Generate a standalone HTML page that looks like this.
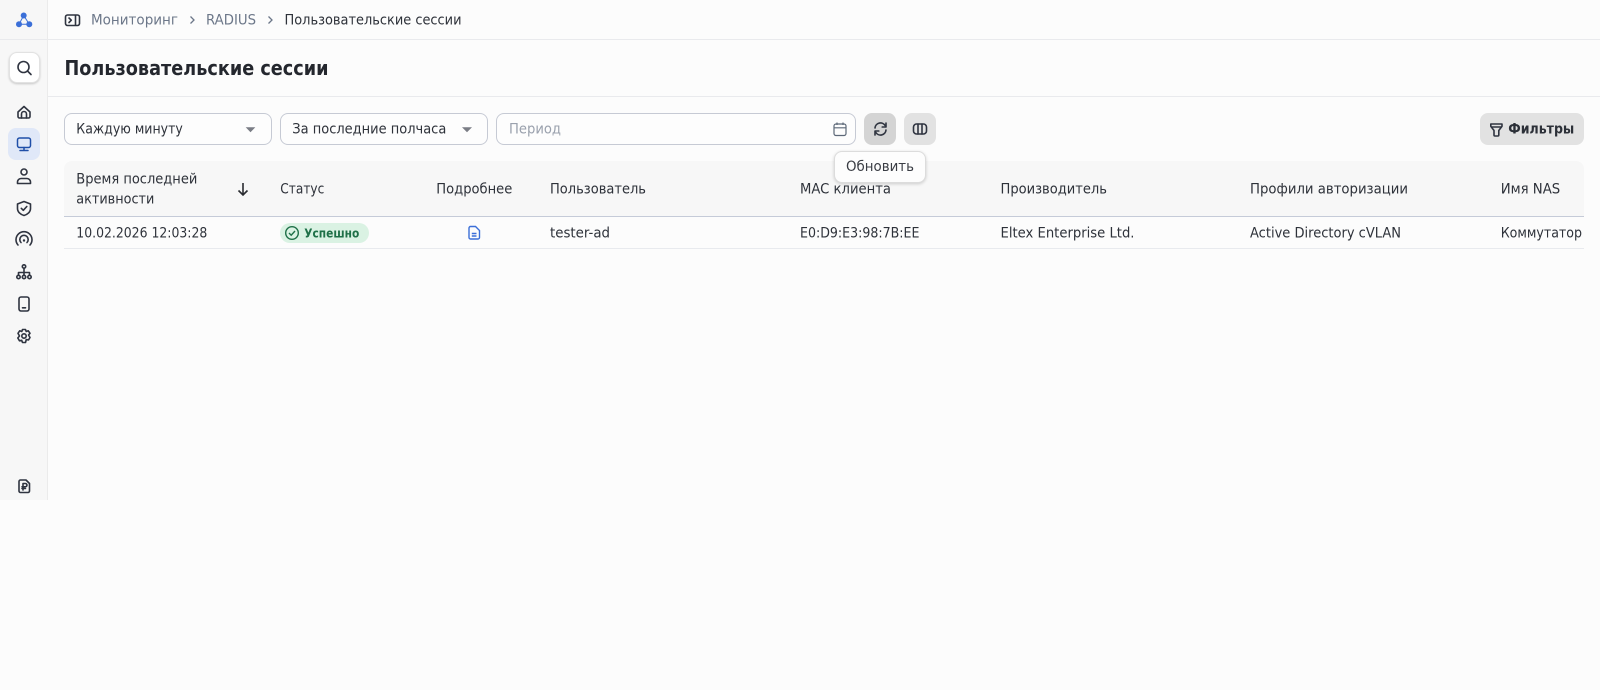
<!DOCTYPE html>
<html lang="ru"><head><meta charset="utf-8"><title>Пользовательские сессии</title>
<style>
html,body{margin:0;padding:0;width:1600px;height:690px;overflow:hidden;background:#fcfcfc}
.a{position:absolute;box-sizing:border-box}
text{font-family:"DejaVu Sans","Liberation Sans",sans-serif;font-size:14px;fill:#2e323a}
.g{fill:#6c7789}.h{fill:#9aa1ad}.b{font-weight:700}
.i{fill:none;stroke:#2f3440;stroke-width:1.6;stroke-linecap:round;stroke-linejoin:round}
</style></head><body>
<div class="a" style="left:0;top:0;width:48px;height:500px;background:#f7f7f7;border-right:1px solid #ebebeb"></div>
<div class="a" style="left:48px;top:39px;width:1552px;height:1px;background:#e9eaed"></div>
<div class="a" style="left:0;top:39px;width:47px;height:1px;background:#e9eaed"></div>
<div class="a" style="left:48px;top:96px;width:1552px;height:1px;background:#e9eaed"></div>
<div class="a" style="left:9px;top:52px;width:31px;height:31px;background:#fff;border:1px solid #e2e2e2;border-radius:8px;box-shadow:0 1px 2px rgba(0,0,0,.2)"></div>
<div class="a" style="left:8px;top:128px;width:32px;height:32px;background:#e0e8f8;border-radius:8px"></div>
<div class="a" style="left:64px;top:113px;width:208px;height:32px;border:1px solid #c6cad4;border-radius:8px;background:#fdfdfd"></div>
<div class="a" style="left:280px;top:113px;width:208px;height:32px;border:1px solid #c6cad4;border-radius:8px;background:#fdfdfd"></div>
<div class="a" style="left:496px;top:113px;width:360px;height:32px;border:1px solid #c6cad4;border-radius:8px;background:#fdfdfd"></div>
<div class="a" style="left:864px;top:113px;width:32px;height:32px;background:#d4d4d4;border-radius:8px"></div>
<div class="a" style="left:904px;top:113px;width:32px;height:32px;background:#e2e2e2;border-radius:8px"></div>
<div class="a" style="left:1480px;top:113px;width:104px;height:32px;background:#e2e2e2;border-radius:8px"></div>
<div class="a" style="left:64px;top:161px;width:1520px;height:56px;background:#f7f7f7;border-radius:8px 8px 0 0;border-bottom:1px solid #c5cbd8"></div>
<div class="a" style="left:64px;top:248px;width:1520px;height:1px;background:#e8eaee"></div>
<div class="a" style="left:280px;top:223px;width:89px;height:20px;background:#daf2e3;border-radius:10px"></div>

<svg class="a" style="left:0;top:0" width="1600" height="690" viewBox="0 0 1600 690">
<!-- logo -->
<path d="M23.700 15.500 19 24.200H29.300Z" fill="none" stroke="#3b6fd8" stroke-width="1"/>
<g fill="#3b6fd8"><circle cx="23.700" cy="15.500" r="3"/><circle cx="19" cy="24.200" r="3"/><circle cx="29.300" cy="24.200" r="3"/></g>
<!-- search -->
<circle class="i" cx="23.500" cy="67" r="5.500"/><path class="i" d="M27.500 71 31 74.500"/>
<!-- home -->
<path class="i" d="M18 112 24 106.500 30 112V116.500A1.500 1.500 0 0 1 28.500 118H19.500A1.500 1.500 0 0 1 18 116.500Z"/><path class="i" d="M21.500 118V114A2.500 2.500 0 0 1 26.500 114V118"/>
<!-- monitor -->
<rect x="17.500" y="138" width="13" height="9.500" rx="2" fill="none" stroke="#1f4fa8" stroke-width="1.500"/><path d="M24 147.500V150M20 150.500H28" fill="none" stroke="#1f4fa8" stroke-width="1.500" stroke-linecap="round"/>
<!-- user -->
<circle class="i" cx="24" cy="172" r="3"/><path class="i" d="M17.500 183.500V182A3.500 3.500 0 0 1 21 178.500H27A3.500 3.500 0 0 1 30.500 182V183.500Z"/>
<!-- shield -->
<path class="i" d="M24 201.500 30.500 204V208.500C30.500 212 27.500 214.500 24 215.500 20.500 214.500 17.500 212 17.500 208.500V204Z"/><path class="i" d="M21.300 208.300 23.300 210.300 26.800 206.500"/>
<!-- wifi -->
<path class="i" d="M18 245A8 8 0 1 1 30 245"/><path class="i" d="M21 242.500A4.200 4.200 0 1 1 27 242.500"/><circle cx="24" cy="240.500" r="1.200" fill="#2f3440"/>
<!-- hierarchy -->
<circle class="i" cx="24" cy="266.500" r="1.700"/><circle class="i" cx="18.500" cy="277" r="1.700"/><circle class="i" cx="24" cy="277" r="1.700"/><circle class="i" cx="29.500" cy="277" r="1.700"/><path class="i" d="M24 268.500V275M18.500 275V272.500H29.500V275"/>
<!-- phone -->
<rect class="i" x="19" y="297" width="10" height="14" rx="2"/><path class="i" d="M22.500 307.800H25.500"/>
<!-- gear -->
<path class="i" d="M22.500 329.500H25.500L26.200 331.500 28.300 330.800 30 333.300 28.500 335 30 337.500 28.500 340 26.300 339.500 25.500 342.500H22.500L21.700 340.300 19.500 340.800 17.800 338 19.500 336 18 333.300 19.700 330.800 21.800 331.500Z"/><circle class="i" cx="24" cy="336" r="2.200"/>
<!-- ruble doc -->
<path class="i" d="M20.500 480H26L29.500 483.500V491A1.500 1.500 0 0 1 28 492.500H20.500A1.500 1.500 0 0 1 19 491V481.500A1.500 1.500 0 0 1 20.500 480Z"/><path class="i" stroke-width="1.200" d="M23 490V483.500H25.300A1.500 1.500 0 0 1 25.300 486.800H22M22 488.500H25.500"/>
<!-- breadcrumb -->
<rect class="i" x="65.500" y="15" width="14" height="10.500" rx="2"/><path class="i" d="M75.500 15.500V25M69 18 71.300 20.200 69 22.500"/>
<text class="g" x="91" y="24.500" textLength="87" lengthAdjust="spacingAndGlyphs">Мониторинг</text>
<path d="M190.500 16.500 194 20 190.500 23.500" fill="none" stroke="#6c7789" stroke-width="1.300"/>
<text class="g" x="206" y="24.500" textLength="50" lengthAdjust="spacingAndGlyphs">RADIUS</text>
<path d="M268.500 16.500 272 20 268.500 23.500" fill="none" stroke="#6c7789" stroke-width="1.300"/>
<text x="284.500" y="24.500" textLength="177" lengthAdjust="spacingAndGlyphs">Пользовательские сессии</text>
<text x="64.500" y="75" class="b" style="font-size:20px;fill:#24272e" textLength="264" lengthAdjust="spacingAndGlyphs">Пользовательские сессии</text>
<!-- toolbar -->
<text x="76.300" y="133.500" textLength="106.500" lengthAdjust="spacingAndGlyphs">Каждую минуту</text>
<path d="M245.700 127.300H255.300L250.500 132.300Z" fill="#7a7d85"/>
<text x="292.300" y="133.500" textLength="154" lengthAdjust="spacingAndGlyphs">За последние полчаса</text>
<path d="M462 127.300H472L467 132.300Z" fill="#7a7d85"/>
<text class="h" x="509" y="133.500" textLength="52" lengthAdjust="spacingAndGlyphs">Период</text>
<rect x="834" y="124" width="12" height="11.500" rx="2" fill="none" stroke="#5d6878" stroke-width="1.200"/><path d="M834 127.800H846M837 122.500V125M843 122.500V125" fill="none" stroke="#5d6878" stroke-width="1.200"/>
<path class="i" d="M875 128A5.500 5.500 0 0 1 885.300 125.800M886 130A5.500 5.500 0 0 1 875.700 132.200"/><path class="i" d="M886 123V127H882.200M875 135V131H878.800"/>
<rect class="i" x="913.500" y="124" width="13" height="10" rx="3"/><path class="i" d="M918 124V134M922 124V134"/>
<path class="i" d="M1490.800 124H1502V126.300L1498.800 130.500V135A1 1 0 0 1 1497.800 136H1495A1 1 0 0 1 1494 135V130.500L1490.800 126.300Z"/><path class="i" d="M1491.500 127H1501.300"/>
<text x="1508.300" y="133.500" class="b" style="fill:#2c3038" textLength="66" lengthAdjust="spacingAndGlyphs">Фильтры</text>
<!-- head -->
<text x="76.300" y="183.500" textLength="121" lengthAdjust="spacingAndGlyphs">Время последней</text>
<text x="76.300" y="203.500" textLength="78" lengthAdjust="spacingAndGlyphs">активности</text>
<path d="M243 183V195M238.500 190.500 243 195 247.500 190.500" fill="none" stroke="#2a2c31" stroke-width="1.600"/>
<text x="280.300" y="193.500" textLength="44" lengthAdjust="spacingAndGlyphs">Статус</text>
<text x="436.300" y="193.500" textLength="76" lengthAdjust="spacingAndGlyphs">Подробнее</text>
<text x="550" y="193.500" textLength="96" lengthAdjust="spacingAndGlyphs">Пользователь</text>
<text x="800" y="193.500" textLength="91" lengthAdjust="spacingAndGlyphs">MAC клиента</text>
<text x="1000.500" y="193.500" textLength="106.500" lengthAdjust="spacingAndGlyphs">Производитель</text>
<text x="1250" y="193.500" textLength="158" lengthAdjust="spacingAndGlyphs">Профили авторизации</text>
<text x="1500.700" y="193.500" textLength="59.500" lengthAdjust="spacingAndGlyphs">Имя NAS</text>
<!-- row -->
<text x="76.300" y="237.500" textLength="131" lengthAdjust="spacingAndGlyphs">10.02.2026 12:03:28</text>
<circle cx="292" cy="233" r="6.300" fill="none" stroke="#1f7048" stroke-width="1.400"/><path d="M289 233 291.200 235.200 295 231" fill="none" stroke="#1f7048" stroke-width="1.400"/>
<text x="304.300" y="237.500" class="b" style="font-size:12px;fill:#1f7048" textLength="55" lengthAdjust="spacingAndGlyphs">Успешно</text>
<path d="M470.500 226.500H475.500L479.500 230.500V237.500A1.500 1.500 0 0 1 478 239H470.500A1.500 1.500 0 0 1 469 237.500V228A1.500 1.500 0 0 1 470.500 226.500Z M471.800 233.500H476.500M471.800 236H476.500" fill="none" stroke="#3b6fd8" stroke-width="1.400"/>
<text x="550" y="237.500" textLength="60" lengthAdjust="spacingAndGlyphs">tester-ad</text>
<text x="800" y="237.500" textLength="119.400" lengthAdjust="spacingAndGlyphs">E0:D9:E3:98:7B:EE</text>
<text x="1000.500" y="237.500" textLength="134" lengthAdjust="spacingAndGlyphs">Eltex Enterprise Ltd.</text>
<text x="1250" y="237.500" textLength="151" lengthAdjust="spacingAndGlyphs">Active Directory cVLAN</text>
<text x="1500.700" y="237.500" textLength="81.300" lengthAdjust="spacingAndGlyphs">Коммутатор</text>
</svg>

<div class="a" style="left:834px;top:151px;width:92px;height:32px;background:#fdfdfd;border:1px solid #dcdcdc;border-radius:8px;box-shadow:0 1px 3px rgba(0,0,0,.18)"></div>
<svg class="a" style="left:834px;top:151px" width="92" height="32" viewBox="834 151 92 32"><text x="846" y="171" style="fill:#3a3d44" textLength="68" lengthAdjust="spacingAndGlyphs">Обновить</text></svg>
</body></html>
